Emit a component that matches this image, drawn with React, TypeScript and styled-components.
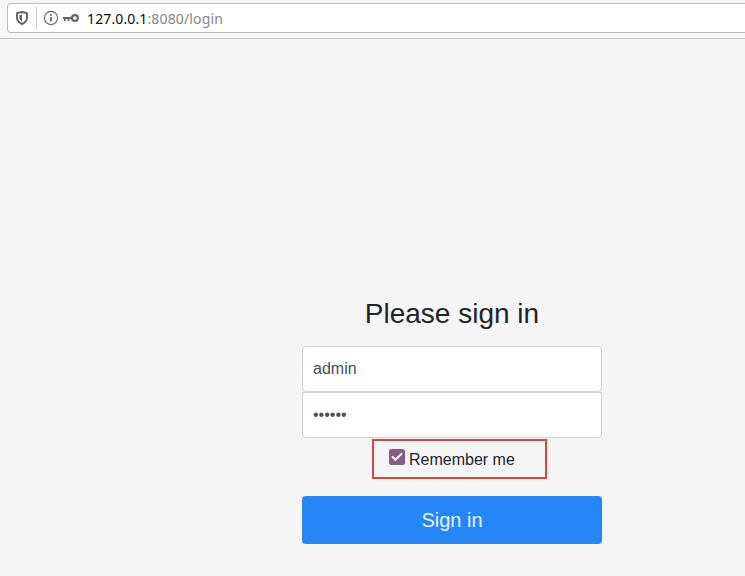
import React from "react";
import styled, { createGlobalStyle } from "styled-components";

const GlobalStyle = createGlobalStyle`
  *, *::before, *::after { box-sizing: border-box; }
  body {
    margin: 0;
    background: #f5f5f5;
    color: #212529;
    font: 16px/24px "Liberation Sans", Arial, sans-serif;
  }
`;

const Page = styled.div`
  display: flex;
  flex-direction: column;
  height: 576px;
  overflow: hidden;
`;

const Toolbar = styled.header`
  height: 39px;
  flex: none;
  padding: 3px 0 0 7px;
  background: #f7f7f7;
  border-bottom: 1px solid #c2c2c2;
`;

const AddressBar = styled.div`
  display: flex;
  align-items: center;
  height: 30px;
  padding-left: 7px;
  background: #fff;
  border: 1px solid #bdbdbd;
  border-right: 0;
  border-radius: 4px 0 0 4px;
`;

const Divider = styled.span`
  width: 1px;
  height: 22px;
  margin: 0 6px 0 7px;
  background: #c8c8c8;
`;

const KeyIcon = styled.svg`
  margin: 0 8px 0 4px;
`;

const Url = styled.span`
  padding-top: 2px;
  color: #858585;
  font: 14px/20px "Noto Sans", sans-serif;
  letter-spacing: 0.16px;
  white-space: pre;
`;

const Host = styled.span`
  color: #0c0c0d;
  letter-spacing: 0.12px;
`;

const Form = styled.main`
  display: flex;
  flex-direction: column;
  align-items: center;
  width: 300px;
  margin: 258px 0 0 302px;
`;

const Title = styled.h2`
  margin: 0 0 16px;
  font-size: 28px;
  line-height: 33px;
  font-weight: 400;
`;

const Field = styled.div<{ $last?: boolean }>`
  width: 300px;
  height: 46px;
  padding: 10px;
  color: #495057;
  background: #fff;
  border: 1px solid #ced4da;
  border-radius: ${(p) => (p.$last ? "0 0 4px 4px" : "4px")};
`;

const Remember = styled.label`
  display: flex;
  align-items: flex-start;
  width: 175px;
  height: 40px;
  margin: 1px 0 17px 15px;
  padding: 7px 0 0 15px;
  border: 2px solid #d94545;
`;

const CheckIcon = styled.svg`
  margin: 1px 4px 0 0;
`;

const SignIn = styled.button`
  width: 300px;
  height: 48px;
  padding: 0;
  color: #e9f3ff;
  background: #2487f7;
  border: 0;
  border-radius: 4px;
  font: 20px/30px "Liberation Sans", Arial, sans-serif;
`;

export default function App() {
  return (
    <Page>
      <GlobalStyle />
      <Toolbar>
        <AddressBar>
          <svg width="14" height="16" viewBox="0 0 14 16">
            <path d="M7 2 12 3.2V7.5C12 11 9.7 12.9 7 14 4.3 12.9 2 11 2 7.5V3.2Z" fill="none" stroke="#626262" strokeWidth="1.9" strokeLinejoin="round" />
            <path d="M7 4.6V11.4C5.2 10.4 4.4 9 4.4 7.3V5.2Z" fill="#626262" />
          </svg>
          <Divider />
          <svg width="16" height="16" viewBox="0 0 16 16">
            <circle cx="8" cy="8" r="6.6" fill="none" stroke="#626262" strokeWidth="1.1" />
            <circle cx="8" cy="4.9" r="1" fill="#626262" />
            <path d="M8 7v4.6" stroke="#626262" strokeWidth="1.7" />
          </svg>
          <KeyIcon width="16" height="16" viewBox="0 0 16 16">
            <circle cx="11.9" cy="8" r="2.9" fill="none" stroke="#626262" strokeWidth="2.1" />
            <path d="M0 6.9H9V9.1H6.4V11H4.6V9.1H2.8V11H1V9.1H0Z" fill="#626262" />
          </KeyIcon>
          <Url><Host>127.0.0.1</Host>:8080/login</Url>
        </AddressBar>
      </Toolbar>
      <Form>
        <Title>Please sign in</Title>
        <Field>admin</Field>
        <Field $last>••••••</Field>
        <Remember>
          <CheckIcon width="16" height="16" viewBox="0 0 16 16">
            <rect width="16" height="16" rx="2.5" fill="#875a87" />
            <path d="M2.9 7.3 6.4 10.8 13 4.4" fill="none" stroke="#fff" strokeWidth="2" />
          </CheckIcon>
          Remember me
        </Remember>
        <SignIn>Sign in</SignIn>
      </Form>
    </Page>
  );
}
